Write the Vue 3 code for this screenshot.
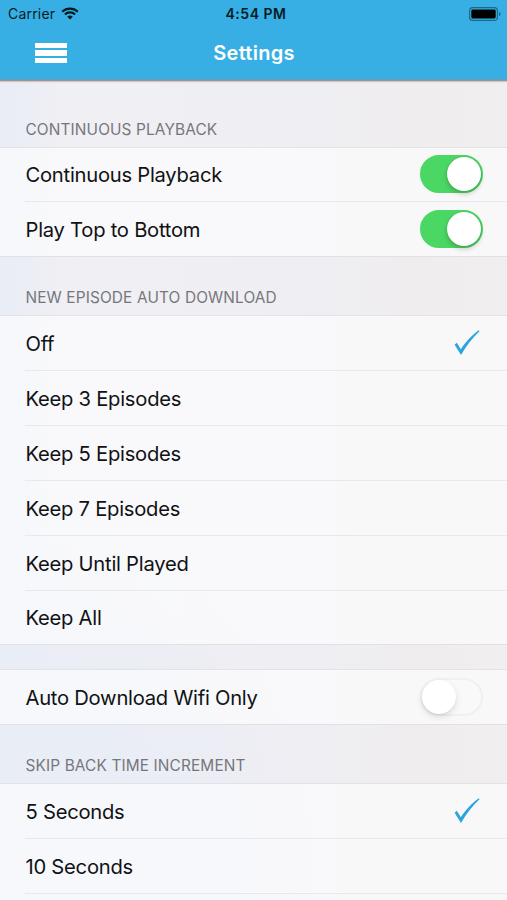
<script setup>
import { ref } from 'vue'

const groups = ref([
  {
    id: 'playback',
    title: 'CONTINUOUS PLAYBACK',
    rows: [
      { label: 'Continuous Playback', toggle: true, on: true },
      { label: 'Play Top to Bottom', toggle: true, on: true },
    ],
  },
  {
    id: 'download',
    title: 'NEW EPISODE AUTO DOWNLOAD',
    rows: [
      { label: 'Off', checked: true },
      { label: 'Keep 3 Episodes' },
      { label: 'Keep 5 Episodes' },
      { label: 'Keep 7 Episodes' },
      { label: 'Keep Until Played' },
      { label: 'Keep All' },
    ],
  },
  {
    id: 'network',
    title: '',
    rows: [{ label: 'Auto Download Wifi Only', toggle: true, on: false }],
  },
  {
    id: 'skip',
    title: 'SKIP BACK TIME INCREMENT',
    rows: [
      { label: '5 Seconds', checked: true },
      { label: '10 Seconds' },
    ],
  },
])

function select(group, row) {
  if (row.toggle) {
    row.on = !row.on
    return
  }
  group.rows.forEach((r) => {
    r.checked = r === row
  })
}
</script>

<template>
  <div class="screen">
    <header class="bar">
      <div class="status">
        <div class="carrier">
          <span>Carrier</span>
          <svg class="signal" viewBox="0 0 18 13" width="18" height="13">
            <path d="M1.2 4.7a11.2 11.2 0 0 1 15.6 0" />
            <path d="M3.9 7.5a7.3 7.3 0 0 1 10.2 0" />
            <path class="dot" d="M9 12.6 6.2 9.8a4 4 0 0 1 5.6 0z" />
          </svg>
        </div>
        <span class="time">4:54 PM</span>
        <svg class="battery" viewBox="0 0 32 14" width="32" height="14">
          <rect class="shell" x="0.6" y="0.6" width="27.8" height="12.8" rx="3.2" />
          <rect x="2.3" y="2.5" width="24.4" height="9" rx="1.4" />
          <path class="nub" d="M30 4.8q1.6.6 1.6 2.2T30 9.2z" />
        </svg>
      </div>
      <nav class="nav">
        <button class="menu" aria-label="Menu"><i></i><i></i><i></i></button>
        <h1>Settings</h1>
      </nav>
    </header>

    <main class="list">
      <section v-for="g in groups" :key="g.id" :class="['group', g.id]">
        <h2>{{ g.title }}</h2>
        <ul>
          <li v-for="r in g.rows" :key="r.label" @click="select(g, r)">
            <span class="label">{{ r.label }}</span>
            <span v-if="r.toggle" :class="['switch', { on: r.on }]"><b></b></span>
            <svg v-else-if="r.checked" class="check" viewBox="0 0 26 26" width="26" height="26">
              <path d="M.6 14.800 2.800 12.800 6.800 19.300C11 12.500 17.500 5.500 24.800.2L25.500 1.200C18.500 7.800 12 16.200 7 25Z" />
            </svg>
          </li>
        </ul>
      </section>
    </main>
  </div>
</template>

<style>
body {
  background: #efeff4;
}
</style>

<style scoped>
.screen {
  height: 900px;
  overflow: hidden;
  display: flex;
  flex-direction: column;
  font-family: Inter, "Liberation Sans", sans-serif;
  color: #111214;
  background:
    radial-gradient(ellipse 330px 420px at 0 100%, #e9edf6 45%, rgba(233, 237, 246, 0) 100%),
    linear-gradient(90deg, #e9edf6 0, #efeff4 60px, #efeef3 300px, #efedee 420px, #f0eeee 100%);
}

.bar {
  flex: none;
  height: 80px;
  box-sizing: border-box;
  background: #38afe4;
  border-bottom: 1px solid #6f9db6;
  box-shadow: 0 1px 0 #9c9193, 0 2px 0 #cbc7cb, 0 3px 0 #e8e7eb;
}

.status {
  height: 27px;
  padding: 0 6px 0 8px;
  display: grid;
  grid-template-columns: 1fr auto 1fr;
  align-items: center;
  font-size: 14px;
  color: #071b25;
}

.carrier {
  display: flex;
  align-items: center;
  gap: 6px;
  letter-spacing: 0.2px;
}

.signal {
  fill: none;
  stroke: #071b25;
  stroke-width: 2.2;
}

.signal .dot {
  fill: #071b25;
  stroke: none;
}

.time {
  padding-left: 3px;
  font-weight: 600;
  letter-spacing: 0.5px;
}

.battery {
  justify-self: end;
  fill: #000;
}

.battery .shell {
  fill: none;
  stroke: #1f6788;
  stroke-width: 1.2;
}

.battery .nub {
  fill: #1f6788;
}

.nav {
  height: 52px;
  padding: 0 35px;
  display: grid;
  grid-template-columns: 1fr auto 1fr;
  align-items: center;
}

.menu {
  width: 32px;
  padding: 0;
  border: 0;
  background: none;
  display: flex;
  flex-direction: column;
  gap: 2px;
}

.menu i {
  height: 5.3px;
  background: #fff;
}

h1 {
  margin: 0;
  padding-left: 1px;
  font-size: 20px;
  font-weight: 600;
  letter-spacing: 0.25px;
  color: #fff;
}

.list {
  flex: 1;
  min-height: 0;
}

h2 {
  margin: 0;
  height: 58px;
  box-sizing: border-box;
  padding: 0 25.500px 7px;
  display: flex;
  align-items: flex-end;
  font-size: 15.400px;
  line-height: 20px;
  letter-spacing: 0.13px;
  font-weight: 400;
  color: #76777c;
}

.playback h2 {
  height: 67px;
}

.network h2 {
  height: 24px;
  padding: 0;
}

ul {
  margin: 0;
  padding: 0;
  list-style: none;
  background: rgba(255, 255, 255, 0.6);
  border-top: 1px solid #e3e3e7;
  border-bottom: 1px solid #e1e1e5;
}

li {
  height: 55px;
  box-sizing: border-box;
  margin-left: 25px;
  padding: 0 24.500px 0 0.500px;
  display: flex;
  align-items: center;
  justify-content: space-between;
  border-bottom: 1px solid #e8e9ec;
}

li:last-child {
  height: 53px;
  border-bottom: 0;
}

.playback li {
  height: 54px;
}

.playback li:last-child {
  height: 54px;
}

.playback li:first-child .switch {
  margin-top: -1px;
}

.network li:last-child {
  height: 54px;
}

.skip ul {
  height: 130px;
  border-bottom: 0;
}

.skip li:last-child {
  height: 55px;
  border-bottom: 1px solid #e8e9ec;
}

.label {
  font-size: 20.200px;
  letter-spacing: -0.25px;
}

.switch {
  width: 63px;
  height: 38px;
  box-sizing: border-box;
  border: 2px solid #f0f0f0;
  border-radius: 19px;
  background: #f9f9f9;
  display: flex;
  align-items: center;
}

.switch b {
  width: 34px;
  height: 34px;
  border-radius: 50%;
  background: #fff;
  box-shadow: 0 3px 6px rgba(0, 0, 0, 0.12), 0 1px 1px rgba(0, 0, 0, 0.05);
}

.switch.on {
  justify-content: flex-end;
  border-color: #4bd763;
  background: #4bd763;
}

.switch.on b {
  box-shadow: 0 3px 5px rgba(0, 0, 0, 0.2), 0 0 2px rgba(0, 0, 0, 0.12);
}

.check {
  margin-right: 2.500px;
  fill: #2ba5df;
}
</style>
